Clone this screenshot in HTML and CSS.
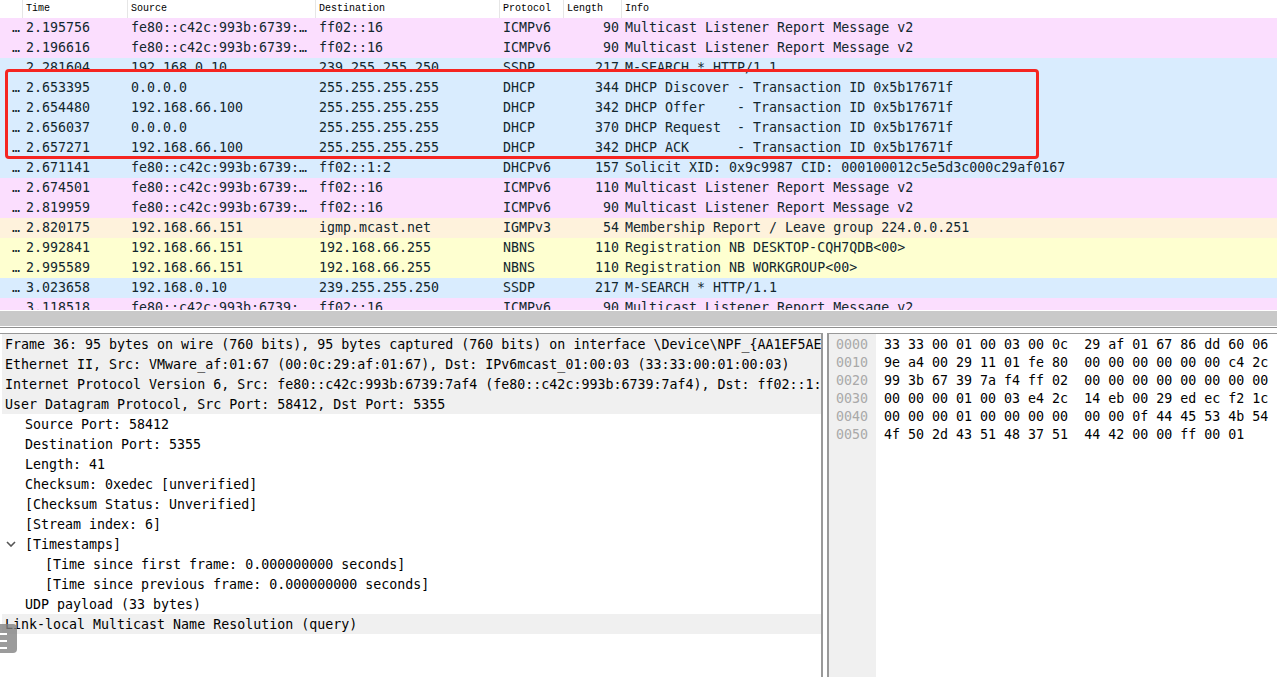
FILE: index.html
```html
<!DOCTYPE html>
<html lang="en">
<head>
<meta charset="utf-8">
<title>Wireshark capture</title>
<link rel="stylesheet" href="styles.css">
</head>
<body>
<div class="app">
  <section class="list">
    <div class="row head">
      <span></span><span class="hc">Time</span><span class="hc">Source</span><span class="hc">Destination</span><span class="hc">Protocol</span><span class="hc">Length</span><span class="hc">Info</span>
    </div>
    <div class="row pink"><span class="no">…</span><span>2.195756</span><span>fe80::c42c:993b:6739:…</span><span>ff02::16</span><span>ICMPv6</span><span class="len">90</span><span>Multicast Listener Report Message v2</span></div>
    <div class="row pink"><span class="no">…</span><span>2.196616</span><span>fe80::c42c:993b:6739:…</span><span>ff02::16</span><span>ICMPv6</span><span class="len">90</span><span>Multicast Listener Report Message v2</span></div>
    <div class="row blue"><span class="no">…</span><span>2.281604</span><span>192.168.0.10</span><span>239.255.255.250</span><span>SSDP</span><span class="len">217</span><span>M-SEARCH * HTTP/1.1</span></div>
    <div class="row blue"><span class="no">…</span><span>2.653395</span><span>0.0.0.0</span><span>255.255.255.255</span><span>DHCP</span><span class="len">344</span><span>DHCP Discover - Transaction ID 0x5b17671f</span></div>
    <div class="row blue"><span class="no">…</span><span>2.654480</span><span>192.168.66.100</span><span>255.255.255.255</span><span>DHCP</span><span class="len">342</span><span>DHCP Offer    - Transaction ID 0x5b17671f</span></div>
    <div class="row blue"><span class="no">…</span><span>2.656037</span><span>0.0.0.0</span><span>255.255.255.255</span><span>DHCP</span><span class="len">370</span><span>DHCP Request  - Transaction ID 0x5b17671f</span></div>
    <div class="row blue"><span class="no">…</span><span>2.657271</span><span>192.168.66.100</span><span>255.255.255.255</span><span>DHCP</span><span class="len">342</span><span>DHCP ACK      - Transaction ID 0x5b17671f</span></div>
    <div class="row blue"><span class="no">…</span><span>2.671141</span><span>fe80::c42c:993b:6739:…</span><span>ff02::1:2</span><span>DHCPv6</span><span class="len">157</span><span>Solicit XID: 0x9c9987 CID: 000100012c5e5d3c000c29af0167</span></div>
    <div class="row pink"><span class="no">…</span><span>2.674501</span><span>fe80::c42c:993b:6739:…</span><span>ff02::16</span><span>ICMPv6</span><span class="len">110</span><span>Multicast Listener Report Message v2</span></div>
    <div class="row pink"><span class="no">…</span><span>2.819959</span><span>fe80::c42c:993b:6739:…</span><span>ff02::16</span><span>ICMPv6</span><span class="len">90</span><span>Multicast Listener Report Message v2</span></div>
    <div class="row orange"><span class="no">…</span><span>2.820175</span><span>192.168.66.151</span><span>igmp.mcast.net</span><span>IGMPv3</span><span class="len">54</span><span>Membership Report / Leave group 224.0.0.251</span></div>
    <div class="row yellow"><span class="no">…</span><span>2.992841</span><span>192.168.66.151</span><span>192.168.66.255</span><span>NBNS</span><span class="len">110</span><span>Registration NB DESKTOP-CQH7QDB&lt;00&gt;</span></div>
    <div class="row yellow"><span class="no">…</span><span>2.995589</span><span>192.168.66.151</span><span>192.168.66.255</span><span>NBNS</span><span class="len">110</span><span>Registration NB WORKGROUP&lt;00&gt;</span></div>
    <div class="row blue"><span class="no">…</span><span>3.023658</span><span>192.168.0.10</span><span>239.255.255.250</span><span>SSDP</span><span class="len">217</span><span>M-SEARCH * HTTP/1.1</span></div>
    <div class="row pink"><span class="no">…</span><span>3.118518</span><span>fe80::c42c:993b:6739:…</span><span>ff02::16</span><span>ICMPv6</span><span class="len">90</span><span>Multicast Listener Report Message v2</span></div>
  </section>
  <div class="mark"></div>
  <div class="split"></div>
  <section class="panes">
    <div class="tree">
      <div class="line sel">Frame 36: 95 bytes on wire (760 bits), 95 bytes captured (760 bits) on interface \Device\NPF_{AA1EF5AE</div>
      <div class="line sel">Ethernet II, Src: VMware_af:01:67 (00:0c:29:af:01:67), Dst: IPv6mcast_01:00:03 (33:33:00:01:00:03)</div>
      <div class="line sel">Internet Protocol Version 6, Src: fe80::c42c:993b:6739:7af4 (fe80::c42c:993b:6739:7af4), Dst: ff02::1:</div>
      <div class="line sel">User Datagram Protocol, Src Port: 58412, Dst Port: 5355</div>
      <div class="line l1">Source Port: 58412</div>
      <div class="line l1">Destination Port: 5355</div>
      <div class="line l1">Length: 41</div>
      <div class="line l1">Checksum: 0xedec [unverified]</div>
      <div class="line l1">[Checksum Status: Unverified]</div>
      <div class="line l1">[Stream index: 6]</div>
      <div class="line l1"><svg class="chev" width="10" height="6" viewBox="0 0 10 6" aria-hidden="true"><path d="M1 1l4 4 4-4" fill="none" stroke="#555" stroke-width="1.6"/></svg>[Timestamps]</div>
      <div class="line l2">[Time since first frame: 0.000000000 seconds]</div>
      <div class="line l2">[Time since previous frame: 0.000000000 seconds]</div>
      <div class="line l1">UDP payload (33 bytes)</div>
      <div class="line sel">Link-local Multicast Name Resolution (query)</div>
      <div class="handle"><i></i><i></i><i></i></div>
    </div>
    <div class="hex">
      <pre class="off">0000
0010
0020
0030
0040
0050</pre>
      <pre class="bytes">33 33 00 01 00 03 00 0c  29 af 01 67 86 dd 60 06
9e a4 00 29 11 01 fe 80  00 00 00 00 00 00 c4 2c
99 3b 67 39 7a f4 ff 02  00 00 00 00 00 00 00 00
00 00 00 01 00 03 e4 2c  14 eb 00 29 ed ec f2 1c
00 00 00 01 00 00 00 00  00 00 0f 44 45 53 4b 54
4f 50 2d 43 51 48 37 51  44 42 00 00 ff 00 01</pre>
    </div>
  </section>
</div>
</body>
</html>
```
FILE: styles.css
```css
* { box-sizing: border-box; }
html, body { margin: 0; height: 100%; background: #fff; }
body { overflow: hidden; }
.app {
  position: relative;
  width: 1277px;
  height: 677px;
  overflow: hidden;
  font: 13.3px/20px "DejaVu Sans Mono", monospace;
  color: #12272e;
}
.list { height: 311px; overflow: hidden; border-bottom: 1px solid #fff; }
.row {
  display: grid;
  grid-template-columns: 22px 105px 188px 184px 64px 58px 1fr;
  height: 20px;
  white-space: pre;
}
.row > span { padding-left: 4px; overflow: hidden; }
.row > .no { padding: 0 2px 0 0; text-align: right; }
.row > .len { padding: 0 2px 0 0; text-align: right; }
.head {
  height: 18px;
  font: 10px/16px "Liberation Mono", monospace;
  color: #000;
  background: #fff;
}
.row > .hc { border-left: 1px solid #e6e6e6; padding-left: 3px; line-height: 17px; }
.pink { background: #fbdefe; }
.blue { background: #d9ecfe; }
.orange { background: #fef2dc; }
.yellow { background: #feffd0; }
.mark {
  position: absolute;
  left: 5px;
  top: 69px;
  width: 1034px;
  height: 90px;
  border: 3px solid #f52521;
  border-radius: 4px;
}
.split {
  height: 16px;
  background: #c9c9c9;
  border-bottom: 1px solid #fff;
}
.panes {
  display: flex;
  height: 350px;
  border-top: 1px solid #8f8f8f;
  padding-top: 5px;
}
.tree {
  position: relative;
  width: 823px;
  flex: none;
  border-top: 1px solid #999;
  border-right: 2px solid #999;
  overflow: hidden;
  color: #000;
}
.line { height: 20px; padding: 1px 0 0 3px; margin-left: 2px; white-space: pre; overflow: hidden; position: relative; }
.sel { background: #f0f0f0; }
.l1 { padding-left: 23px; }
.l2 { padding-left: 43px; }
.chev { position: absolute; left: 4px; top: 7px; }
.handle {
  position: absolute;
  left: 0;
  top: 290px;
  width: 17px;
  height: 29px;
  padding-top: 9px;
  background: rgba(130, 130, 130, .8);
  border-radius: 0 4px 4px 0;
}
.handle i { display: block; width: 7px; height: 2px; margin-bottom: 5px; background: #fff; }
.hex {
  display: flex;
  width: 450px;
  margin-left: 4px;
  border-top: 1px solid #999;
  border-left: 2px solid #999;
}
.hex pre { margin: 0; font: inherit; line-height: 18px; }
.off { width: 47px; flex: none; padding: 2px 0 0 7px; background: #f0f0f0; color: #a9a9a9; }
.bytes { padding: 2px 0 0 8px; color: #000; }
```
